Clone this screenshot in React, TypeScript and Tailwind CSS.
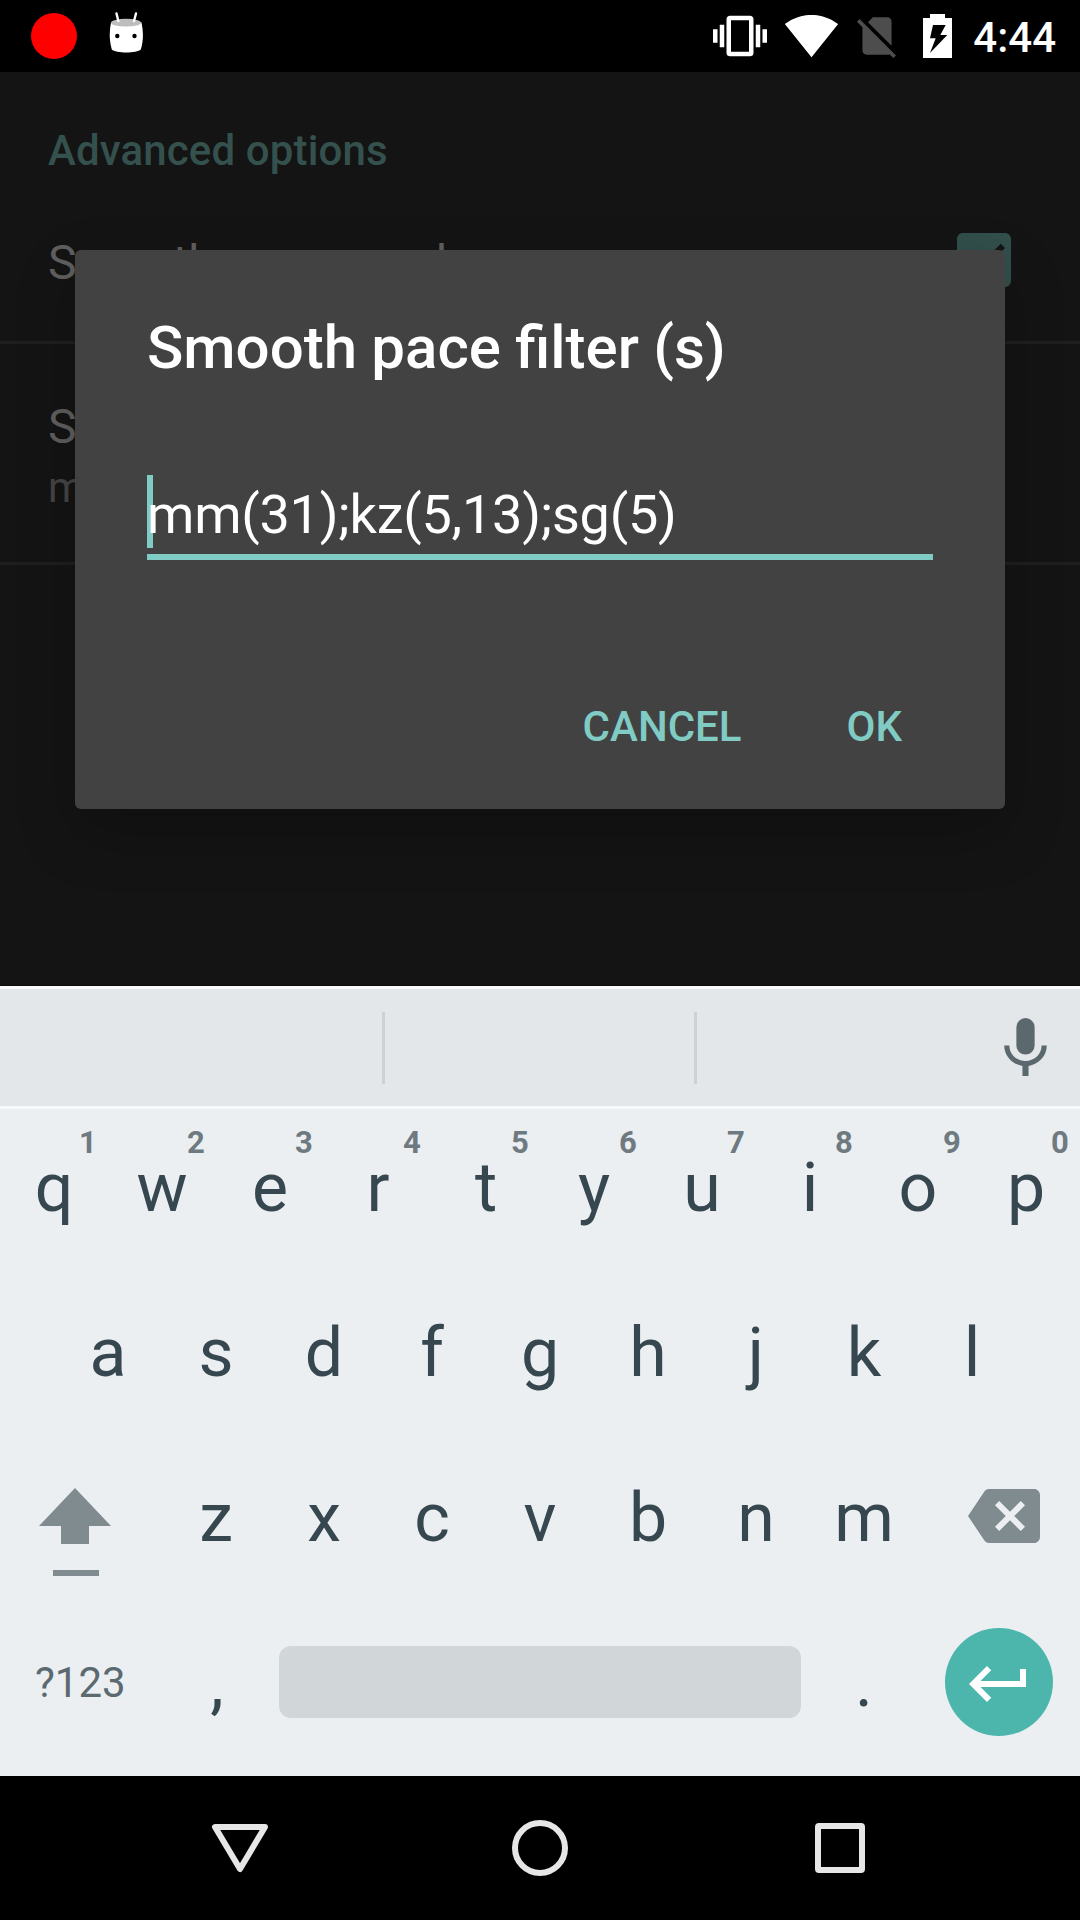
import React from "react";

function StatusBar() {
  return (
    <header className="flex h-[72px] shrink-0 items-center bg-black">
      <div className="ml-[31px] size-[46px] rounded-full bg-[#ff0000]" />
      <svg className="ml-8 h-[42px] w-[34px] -translate-y-[3px]" viewBox="109 12 34 42">
        <path d="M111 22.500c4.500-3.500 26-3.500 30.500 0 2 9 2 18-.7 27-4 4-25 4-29 0-2.600-9-2.600-18-.8-27z" fill="#fff" />
        <ellipse cx="126" cy="22.700" rx="15" ry="3.900" fill="#bdbdbd" />
        <path d="M116.500 13.500l1.800 7.500M136 13.500l-2 7.500" stroke="#fff" strokeWidth="2.400" strokeLinecap="round" />
        <circle cx="117.300" cy="36" r="2.200" fill="#000" />
        <circle cx="134.500" cy="36" r="2.200" fill="#000" />
      </svg>
      <div className="ml-auto flex items-center">
        <svg className="size-[54px]" viewBox="0 0 24 24" fill="#fff">
          <path d="M0 15h2V9H0v6zm3 2h2V7H3v10zm19-8v6h2V9h-2zm-3 8h2V7h-2v10zM16.500 3h-9C6.670 3 6 3.670 6 4.500v15c0 .83.67 1.500 1.500 1.500h9c.83 0 1.500-.67 1.500-1.500v-15c0-.83-.67-1.500-1.500-1.500zM16 19H8V5h8v14z" />
        </svg>
        <svg className="ml-[17px] size-[55px] -translate-y-[1px]" viewBox="0 0 24 24" fill="#fff">
          <path d="M12.010 21.490L23.640 7c-.45-.34-4.930-4-11.640-4C5.280 3 .81 6.660.36 7l11.630 14.490.01.010.01-.010z" />
        </svg>
        <svg className="ml-[13px] size-[50px]" viewBox="0 0 24 24" fill="#4d4d4d">
          <path d="M18.990 5c0-1.100-.89-2-1.990-2h-7L7.660 5.340 19 16.680 18.990 5zM3.650 3.880L2.380 5.150 5 7.770V19c0 1.100.9 2 2 2h10.010c.35 0 .67-.1.960-.26l1.880 1.880 1.270-1.270L3.650 3.880z" />
        </svg>
        <svg className="ml-[21px] h-[44px] w-[29px]" viewBox="0 0 29 44">
          <path fill="#fff" d="M7 0h15v4h7v40H0V4h7z" />
          <path fill="#000" d="M10 11h12.700l-5.400 10h7L7 39l5.700-14.700H7z" />
        </svg>
        <span className="ml-[21px] mr-[24px] pt-[3px] text-[42px] leading-[48px] font-medium text-white">4:44</span>
      </div>
    </header>
  );
}

function SettingsScreen() {
  return (
    <section className="flex h-[913px] shrink-0 flex-col overflow-hidden bg-[#141414]">
      <h2 className="pt-[55px] pl-12 text-[42px] leading-[48px] font-medium tracking-[0.14px] text-[#34514e]">Advanced options</h2>
      <div className="flex h-[169px] items-start justify-between border-b-[3px] border-[#1f1f1f] pr-[69px] pl-12">
        <span className="pt-[60px] text-[48px] leading-[56px] tracking-[-0.15px] text-[#5f5f5f]">Smooth pace graph</span>
        <svg className="mt-[58px] size-[54px]" viewBox="3 3 18 18">
          <path
            fill="#324f4c"
            d="M19 3H5c-1.110 0-2 .9-2 2v14c0 1.100.89 2 2 2h14c1.110 0 2-.9 2-2V5c0-1.100-.89-2-2-2zm-9 14l-5-5 1.410-1.410L10 14.170l7.590-7.590L19 8l-9 9z"
          />
        </svg>
      </div>
      <div className="flex h-[221px] flex-col border-b-[3px] border-[#1f1f1f] pt-[54px] pl-12">
        <span className="text-[48px] leading-[57px] text-[#5f5f5f]">Smooth pace filter (s)</span>
        <span className="pt-[1px] text-[42px] leading-[64px] text-[#454545]">mm(31);kz(5,13);sg(5)</span>
      </div>
    </section>
  );
}

function FilterDialog() {
  return (
    <div className="absolute top-[250px] left-[75px] flex h-[559px] w-[930px] flex-col rounded-[6px] bg-[#424242] px-[72px] shadow-[0_24px_60px_rgba(0,0,0,0.22)]">
      <h1 className="pt-[63px] text-[60px] leading-[70px] font-medium [word-spacing:-0.6px] text-white">Smooth pace filter (s)</h1>
      <div className="relative mt-[92px] h-[85px] border-b-[6px] border-[#80cbc4]">
        <div className="absolute top-0 left-0 h-[73px] w-[6px] bg-[#80cbc4]" />
        <div className="relative pt-[7px] text-[54px] leading-[66px] tracking-[-0.23px] text-white">mm(31);kz(5,13);sg(5)</div>
      </div>
      <div className="mt-[142px] mr-[31px] flex justify-end gap-[105px] text-[42px] leading-[50px] font-medium text-[#80cbc4]">
        <button>CANCEL</button>
        <button>OK</button>
      </div>
    </div>
  );
}

function Key({ label, hint }: { label: string; hint?: string }) {
  return (
    <div className="relative flex h-[165px] w-[108px] justify-center text-[68px] leading-[80px] text-[#37474f]">
      <span>{label}</span>
      {hint && (
        <span className="absolute -top-[23px] left-[79px] text-[31px] leading-[36px] font-bold text-[#6e7a80]">{hint}</span>
      )}
    </div>
  );
}

function Keyboard() {
  return (
    <section className="flex h-[791px] shrink-0 flex-col border-t border-[#0c0c0c] bg-[#ebeff2]">
      <div className="flex h-[123px] shrink-0 items-center border-y-[3px] border-t-[#fafafa] border-b-[#f6f8fa] bg-[#e3e7ea]">
        <div className="ml-[382px] h-[72px] w-[3px] bg-[#cdd1d4]" />
        <div className="ml-[309px] h-[72px] w-[3px] bg-[#cdd1d4]" />
        <svg className="mt-[1px] mr-[18px] ml-auto size-[73px]" viewBox="0 0 24 24" fill="#5b686e">
          <path d="M12 2a3 3 0 0 1 3 3v6a3 3 0 0 1-6 0V5a3 3 0 0 1 3-3zM17.300 11c0 3-2.540 5.100-5.300 5.100S6.700 14 6.700 11H5c0 3.410 2.720 6.230 6 6.720V21h2v-3.280c3.280-.48 6-3.300 6-6.720h-1.700z" />
        </svg>
      </div>
      <div className="flex h-[165px] pt-[39px]">
        {"qwertyuiop".split("").map((c, i) => (
          <Key key={c} label={c} hint={"1234567890"[i]} />
        ))}
      </div>
      <div className="flex h-[165px] justify-center pt-[39px]">
        {"asdfghjkl".split("").map((c) => (
          <Key key={c} label={c} />
        ))}
      </div>
      <div className="flex h-[165px] items-start">
        <svg className="mt-[48px] mr-[51px] ml-[39px] h-[90px] w-[72px]" viewBox="0 0 72 90" fill="#808b90">
          <path d="M36 1l36 38H50v18H22V39H0zM14 83h46v6H14z" />
        </svg>
        <div className="flex pt-[39px]">
          {"zxcvbnm".split("").map((c) => (
            <Key key={c} label={c} />
          ))}
        </div>
        <svg className="mt-[41px] ml-[50px] size-[72px]" viewBox="0 0 24 24" fill="#808b90">
          <path d="M22 3H7c-.69 0-1.230.35-1.590.88L0 12l5.410 8.110c.36.53.9.89 1.590.89h15c1.100 0 2-.9 2-2V5c0-1.100-.9-2-2-2zm-3 12.590L17.590 17 14 13.410 10.410 17 9 15.590 12.590 12 9 8.410 10.410 7 14 10.590 17.590 7 19 8.410 15.410 12 19 15.590z" />
        </svg>
      </div>
      <div className="flex h-[172px] items-start">
        <span className="w-[163px] pt-[55px] pl-[35px] text-[42px] leading-[48px] text-[#5b6a70]">?123</span>
        <div className="flex pt-[39px]">
          <Key label="," />
        </div>
        <div className="mt-[42px] ml-[8px] h-[72px] w-[522px] rounded-[12px] bg-[#d1d6d9]" />
        <div className="ml-[9px] flex pt-[39px]">
          <Key label="." />
        </div>
        <div className="mt-[24px] ml-[27px] flex size-[108px] items-center justify-center rounded-full bg-[#4db6ac]">
          <svg className="mt-[4px] size-[72px]" viewBox="0 0 24 24" fill="#fff">
            <path d="M19 7v4H5.830l3.580-3.590L8 6l-6 6 6 6 1.410-1.410L5.830 13H21V7z" />
          </svg>
        </div>
      </div>
    </section>
  );
}

function NavBar() {
  return (
    <nav className="flex h-[144px] shrink-0 items-center justify-center gap-[240px] bg-black">
      <svg className="size-[60px]" viewBox="0 0 60 60" fill="none" stroke="#e6e6e6" strokeWidth="6" strokeLinejoin="round">
        <path d="M5 9h50L30 51z" />
      </svg>
      <svg className="size-[60px]" viewBox="0 0 60 60" fill="none" stroke="#e6e6e6" strokeWidth="6">
        <circle cx="30" cy="30" r="25" />
      </svg>
      <svg className="size-[60px]" viewBox="0 0 60 60" fill="none" stroke="#e6e6e6" strokeWidth="6" strokeLinejoin="round">
        <rect x="8" y="8" width="44" height="44" rx="1" />
      </svg>
    </nav>
  );
}

export default function App() {
  return (
    <main className="relative flex h-[1920px] w-[1080px] flex-col overflow-hidden bg-black font-['Roboto',sans-serif]">
      <StatusBar />
      <SettingsScreen />
      <Keyboard />
      <NavBar />
      <FilterDialog />
    </main>
  );
}
